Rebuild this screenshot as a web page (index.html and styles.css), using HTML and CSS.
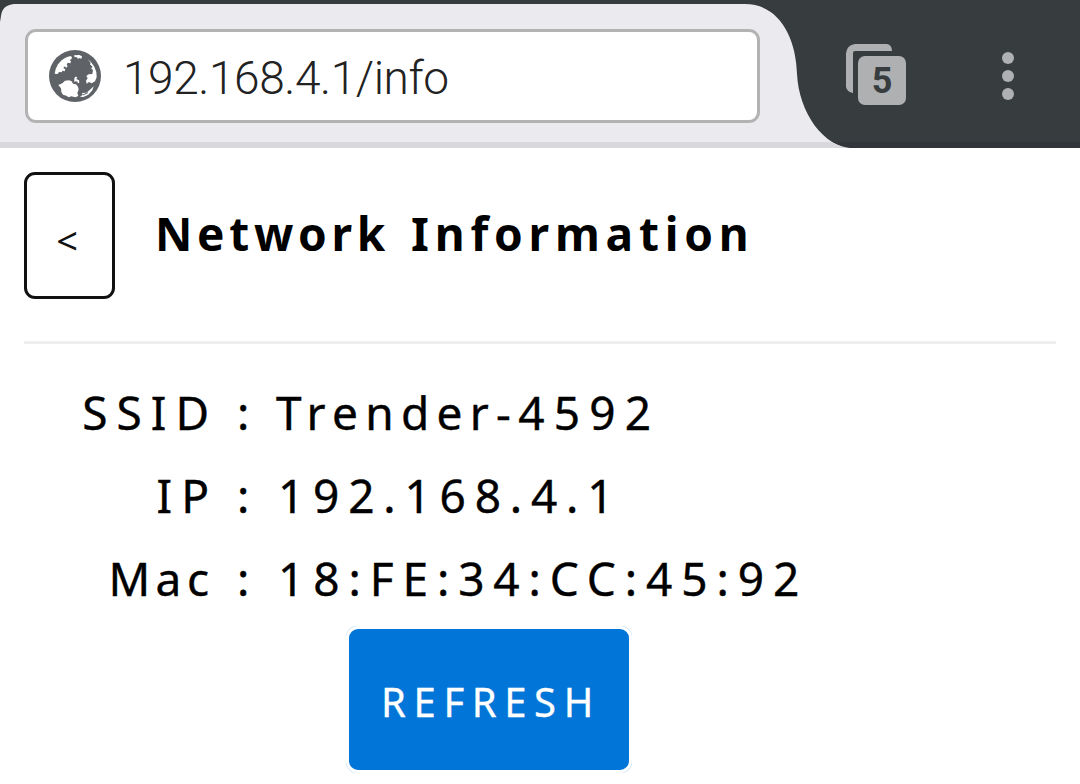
FILE: index.html
```html
<!DOCTYPE html>
<html lang="en">
<head>
<meta charset="utf-8">
<title>Network Information</title>
<link rel="stylesheet" href="styles.css">
</head>
<body>
<header class="browser">
  <svg class="tab-shape" viewBox="0 0 1080 148" aria-hidden="true">
    <path fill="#ebeaef" d="M0 148V22L1 16Q2 5 14 4H745C778 4 796 36 797 74C799 113 824 148 853 148Z"/>
    <path fill="#d9d8dd" d="M0 142H831Q841 147 853 148H0Z"/>
    <path fill="#32363a" d="M833 142H1080V148H850Q841 147 833 142Z"/>
  </svg>
  <div class="address">
    <svg class="globe" viewBox="0 0 156 156" aria-hidden="true">
      <circle cx="78" cy="78" r="78" fill="#5f6368"/>
      <g fill="#fff">
        <path d="M17 71L20 57L27 43L38 31L49 23L57 20L65 18L69 22L67 28L62 30L66 34L64 40L56 38L53 44L56 48L52 53L47 49L43 54L49 58L47 64L40 62L38 67L30 66L26 72Z"/>
        <path d="M75 16L91 15L99 19L97 26L91 24L87 27L83 21L77 22Z"/>
        <path d="M116 28L126 36L136 50L142 66L143 82L138 94L128 100L120 96L113 101L111 92L116 85L112 78L119 73L130 72L132 60L126 55L131 51L123 43L125 38Z"/>
        <path d="M28 105L40 100L48 92L60 91L68 94L72 101L81 103L87 110L89 119L85 129L88 138L79 142L67 139L59 142L52 137L42 134L37 126L36 115Z"/>
        <path d="M76 85L79 80L85 81L82 87L90 91L91 98L85 100L87 95L80 94L76 96Z"/>
        <path d="M134 109L130 121L118 134L103 141L93 140L101 134L99 129L112 128L123 119Z"/>
      </g>
      <path d="M110 124L124 113M101 135L117 128" fill="none" stroke="#5f6368" stroke-width="3"/>
    </svg>
    <span class="url">192.168.4.1/info</span>
  </div>
  <div class="tabs">
    <svg class="tab-back" viewBox="0 0 46 49" aria-hidden="true"><path fill="#afb0b2" d="M9 0H41Q46 1 46 7H9Q7 7 7 9V49Q1 48 0 43V9Q1 1 9 0Z"/></svg>
    <span class="tab-count">5</span>
  </div>
  <div class="menu"><i class="dot"></i><i class="dot"></i><i class="dot"></i></div>
</header>
<main class="page">
  <div class="title-row">
    <button class="back">&lt;</button>
    <h1 class="title"><span class="word-a">Network</span> <span class="word-b">Information</span></h1>
  </div>
  <dl class="info">
    <dt class="label ssid">SSID</dt><dd class="colon">:</dd><dd class="value v-ssid"><span class="name">Trender-</span>4592</dd>
    <dt class="label ip">IP</dt><dd class="colon">:</dd><dd class="value v-ip">192.168.4.1</dd>
    <dt class="label mac">Mac</dt><dd class="colon">:</dd><dd class="value v-mac">18:FE:34:CC:45:92</dd>
  </dl>
  <div class="halo"><button class="refresh">REFRESH</button></div>
</main>
</body>
</html>
```
FILE: styles.css
```css
* { box-sizing: border-box; }
body { margin: 0; width: 1080px; height: 784px; overflow: hidden; background: #fff; color: #000; font-family: "Noto Sans", sans-serif; }
.browser { position: relative; display: flex; height: 148px; background: #373c3f; padding: 29px 0 0 25px; }
.tab-shape { position: absolute; inset: 0; width: 1080px; height: 148px; }
.address { position: relative; display: flex; align-items: center; width: 735px; height: 94px; padding-left: 21px; border: 3px solid #b3b3b3; border-radius: 11px; background: #fff; }
.globe { width: 52px; height: 52px; flex: none; }
.url { margin: 3px 0 0 22px; font: 300 46px/60px Roboto, sans-serif; color: #222; white-space: nowrap; letter-spacing: -0.4px; }
.tabs { position: relative; width: 60px; height: 61px; margin: 15px 1px 0 86px; }
.tab-back { display: block; width: 46px; height: 49px; }
.tab-count { position: absolute; right: 0; bottom: 0; width: 48px; height: 49px; border-radius: 7px; background: #afb0b2; color: #373c3f; font: 700 36px/51px Roboto, sans-serif; text-align: center; }
.menu { position: relative; display: flex; flex-direction: column; gap: 6px; margin: 23px 0 0 95px; }
.dot { width: 12px; height: 12px; border-radius: 50%; background: #afb0b2; }
.page { padding: 24px 24px 0; }
.title-row { display: flex; height: 172px; border-bottom: 3px solid #eee; }
.back { width: 91px; height: 127px; flex: none; padding: 8px 5px 0 0; border: 3px solid #111; border-radius: 11px; background: #fff; color: #111; font: 400 38px/40px "Noto Sans", sans-serif; }
.title { display: flex; margin: 30px 0 0 40px; font-size: 46px; line-height: 63px; font-weight: 700; white-space: nowrap; }
.word-a { letter-spacing: 4.7px; width: 256px; }
.word-b { letter-spacing: 5.8px; }
.info { display: grid; grid-template-columns: 185px 67px auto; grid-auto-rows: 83px; justify-content: start; margin: 27px 0 0; font-size: 46px; line-height: 83px; white-space: nowrap; -webkit-text-stroke: 0.4px #000; }
.label { text-align: right; letter-spacing: 9px; margin-right: -9px; }
.mac { letter-spacing: 5.5px; margin-right: -5.5px; }
.colon { margin: 0; padding-left: 28px; }
.value { margin: 0; letter-spacing: 9.2px; }
.name { letter-spacing: 7.3px; }
.v-ip { padding-left: 2px; letter-spacing: 8.8px; }
.v-mac { padding-left: 2px; letter-spacing: 8.9px; }
.halo { width: 286px; height: 147px; margin: 6px 0 0 322px; border-radius: 11px; background: #a9d3f5; }
.refresh { display: block; width: 286px; height: 147px; padding: 5px 0 0 4px; border: 3px solid #fff; border-radius: 12px; background: #0275d8; color: #fff; font: 400 40px/56px "Noto Sans", sans-serif; letter-spacing: 7.6px; -webkit-text-stroke: 0.3px #fff; }
```
